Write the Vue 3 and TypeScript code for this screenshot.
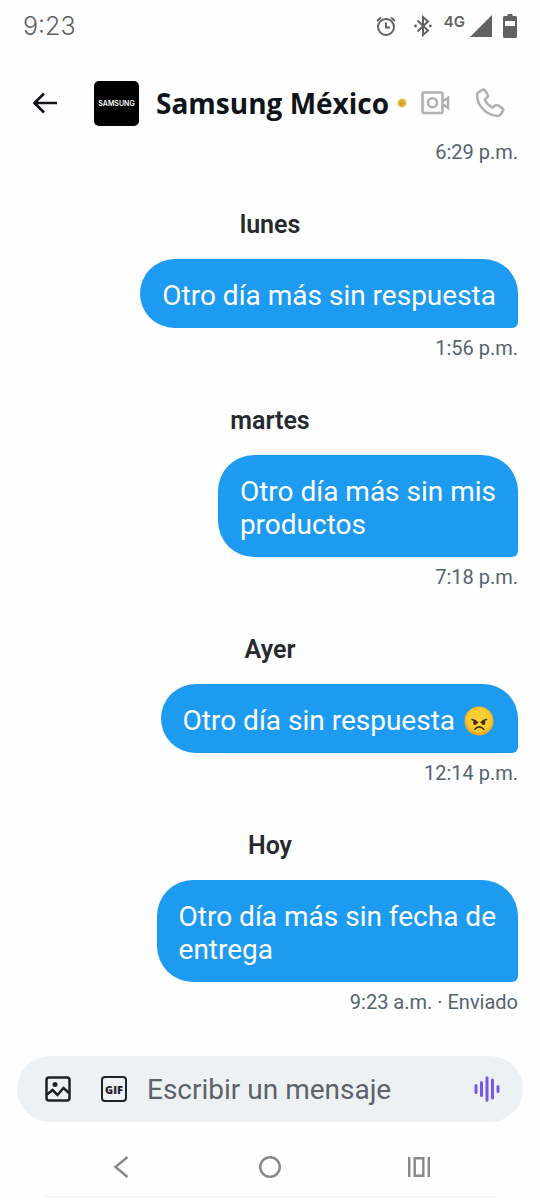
<script setup lang="ts">
import { ref } from 'vue'

interface Message {
  day: string
  text: string
  angry?: boolean
  meta: string
}

const messages: Message[] = [
  { day: 'lunes', text: 'Otro día más sin respuesta', meta: '1:56 p.m.' },
  { day: 'martes', text: 'Otro día más sin mis\nproductos', meta: '7:18 p.m.' },
  { day: 'Ayer', text: 'Otro día sin respuesta ', angry: true, meta: '12:14 p.m.' },
  { day: 'Hoy', text: 'Otro día más sin fecha de\nentrega', meta: '9:23 a.m. · Enviado' },
]

const draft = ref('')
</script>

<template>
  <div class="screen">
    <div class="status">
      <span class="clock">9:23</span>
      <div class="status-icons">
        <svg class="alarm" width="20" height="20" viewBox="0 0 20 20" fill="none" stroke="#616161" stroke-width="2">
          <circle cx="10" cy="11" r="8" />
          <path d="M10 6.5V11.5H14M1 5L5 1.5M19 5L15 1.5" />
        </svg>
        <svg class="bluetooth" width="18" height="22" viewBox="0 0 18 22" fill="none" stroke="#616161" stroke-width="2">
          <path d="M3.5 5.5L14 15.5L9 20V2L14 6.5L3.5 16.5" />
          <circle cx="1.5" cy="11" r="1.4" fill="#616161" stroke="none" />
          <circle cx="16.3" cy="11" r="1.4" fill="#616161" stroke="none" />
        </svg>
        <span class="network">4G</span>
        <svg class="signal" width="22" height="22" viewBox="0 0 22 22" fill="#616161"><path d="M22 0V22H0Z" /></svg>
        <svg width="14" height="24" viewBox="0 0 14 24" fill="#616161">
          <path fill-rule="evenodd" d="M4.500 0H9.500V2H12.500Q14 2 14 3.500V22.500Q14 24 12.500 24H1.500Q0 24 0 22.500V3.500Q0 2 1.500 2H4.500ZM2 7V12H12V7Z" />
        </svg>
      </div>
    </div>

    <header class="header">
      <button class="icon-button back" aria-label="Atrás">
        <svg width="26" height="22" viewBox="0 0 26 22" fill="none" stroke="#0f1419" stroke-width="2.600">
          <path d="M25 11H3M12 1.500L2.500 11L12 20.500" />
        </svg>
      </button>
      <div class="avatar">SAMSUNG</div>
      <h1 class="name">Samsung México</h1>
      <svg class="badge" width="10" height="10" viewBox="0 0 10 10">
        <circle cx="5" cy="5" r="4.300" fill="#e2b52c" />
        <path d="M3 5.200L4.500 6.600L7 3.600" fill="none" stroke="#c99a1e" stroke-width="1.200" />
      </svg>
      <button class="icon-button video" aria-label="Videollamada">
        <svg width="29" height="24" viewBox="0 0 29 24" fill="none" stroke="#b0b1b3" stroke-width="2.600">
          <rect x="1.500" y="1.500" width="20" height="20.500" rx="1.500" />
          <circle cx="11.500" cy="11.700" r="4.500" />
          <path d="M22 10L27 6.800V16.800L22 13.600" />
        </svg>
      </button>
      <button class="icon-button phone" aria-label="Llamar">
        <svg width="30" height="30" viewBox="0 0 30 30" fill="none" stroke="#b0b1b3" stroke-width="2.600" stroke-linejoin="round">
          <path d="M3.500 4.200L7.500 1.800Q9 1 10 2.400L12.600 6.800Q13.400 8.200 12.200 9.400L9.800 11.600Q12 16.800 17.500 19.500L20.300 17.400Q21.500 16.600 22.900 17.400L27.300 20.200Q28.800 21.300 27.900 22.800L25.600 26.500Q24.600 28 22.500 28C12 27.500 2.500 18.500 2 7.500Q2 5.200 3.500 4.200Z" />
        </svg>
      </button>
    </header>

    <main class="thread">
      <p class="meta">6:29 p.m.</p>
      <section v-for="m in messages" :key="m.day" class="group">
        <h2 class="day">{{ m.day }}</h2>
        <p class="bubble"><span class="text">{{ m.text }}</span><svg v-if="m.angry" class="emoji" role="img" aria-label="Enojado" width="30" height="30" viewBox="0 0 30 30">
            <defs>
              <radialGradient id="face" cx="50%" cy="45%" r="55%">
                <stop offset="0" stop-color="#fdd43c" />
                <stop offset="0.700" stop-color="#fbc92e" />
                <stop offset="1" stop-color="#eda21d" />
              </radialGradient>
            </defs>
            <circle cx="15" cy="15" r="14.500" fill="url(#face)" />
            <g fill="#422b0d">
              <ellipse cx="11" cy="16.800" rx="1.900" ry="2.300" />
              <ellipse cx="19.500" cy="16.800" rx="1.900" ry="2.300" />
            </g>
            <path d="M8 13.500Q11 14 13.500 16.500M22.500 13.500Q19.500 14 17 16.500M10.700 23.200Q15.200 18.700 19.800 23.200" fill="none" stroke="#422b0d" stroke-width="1.600" stroke-linecap="round" />
          </svg></p>
        <p class="meta">{{ m.meta }}</p>
      </section>
    </main>

    <form class="composer" @submit.prevent>
      <button type="button" class="icon-button" aria-label="Foto">
        <svg width="26" height="26" viewBox="0 0 26 26" fill="none" stroke="#1d2129" stroke-width="2.500">
          <rect x="1.500" y="1.500" width="23" height="23" rx="2.500" />
          <path d="M2 18.500L7.500 14L12.500 19L18.500 12L24 17" />
          <circle cx="10" cy="8.500" r="2.500" fill="#1d2129" stroke="none" />
        </svg>
      </button>
      <button type="button" class="icon-button gif" aria-label="GIF">GIF</button>
      <input v-model="draft" class="field" type="text" placeholder="Escribir un mensaje" aria-label="Escribir un mensaje" />
      <button type="button" class="icon-button" aria-label="Mensaje de voz">
        <svg width="26" height="26" viewBox="0 0 26 26" stroke="#7856e8" stroke-width="3" stroke-linecap="round">
          <path d="M2 9.500V16.500M7.500 6.500V19.500M13 1.800V24.200M18.500 4V22M24 10.500V15.500" />
        </svg>
      </button>
    </form>

    <nav class="system">
      <button class="icon-button" aria-label="Volver">
        <svg width="16" height="22" viewBox="0 0 16 22" fill="none" stroke="#888" stroke-width="2.400"><path d="M14.500 1L2.500 11L14.500 21" /></svg>
      </button>
      <button class="icon-button" aria-label="Inicio">
        <svg width="24" height="24" viewBox="0 0 24 24" fill="none" stroke="#888" stroke-width="2.400"><circle cx="12" cy="12" r="9.800" /></svg>
      </button>
      <button class="icon-button" aria-label="Recientes">
        <svg width="24" height="22" viewBox="0 0 24 22" fill="none" stroke="#888" stroke-width="2.400"><path d="M2.200 1V21M21.800 1V21M7.700 2.200H16.300V19.800H7.700Z" /></svg>
      </button>
    </nav>
    <div class="edge"></div>
  </div>
</template>

<style>
body {
  margin: 0;
  background: #fefefe;
}
</style>

<style scoped>
.screen {
  display: flex;
  flex-direction: column;
  min-height: 100vh;
  background: #fefefe;
  color: #0f1419;
  font-family: Roboto, "Liberation Sans", sans-serif;
}
.status {
  display: flex;
  align-items: center;
  justify-content: space-between;
  height: 52px;
  padding: 0 23px;
  color: #616161;
}
.clock {
  font-family: Inter, sans-serif;
  font-size: 25px;
  font-weight: 300;
}
.status-icons {
  display: flex;
  align-items: center;
}
.bluetooth {
  margin: 0 12px 0 18px;
}
.network {
  align-self: flex-start;
  font-family: Inter, sans-serif;
  font-size: 15px;
  font-weight: 600;
  line-height: 16px;
}
.signal {
  margin: 0 11px 0 5px;
}
.icon-button {
  display: flex;
  align-items: center;
  justify-content: center;
  flex: none;
  padding: 0;
  border: 0;
  background: none;
  color: inherit;
}
.header {
  display: flex;
  align-items: center;
  height: 74px;
  padding: 14px 35px 0 32px;
}
.avatar {
  display: flex;
  align-items: center;
  justify-content: center;
  width: 45px;
  height: 45px;
  margin: 0 17px 0 36px;
  border-radius: 5px;
  background: #000;
  color: #fff;
  font: 600 7px Inter, sans-serif;
}
.name {
  margin: 0;
  font-family: "Open Sans", sans-serif;
  font-size: 28px;
  font-weight: 700;
  line-height: 36px;
  white-space: nowrap;
}
.badge {
  margin: 0 auto 0 8px;
}
.phone {
  margin-left: 25px;
}
.thread {
  flex: 1;
  padding: 0 22px;
}
.group {
  display: flex;
  flex-direction: column;
}
.day {
  margin: 49px 0 22px;
  font-size: 25px;
  font-weight: 600;
  line-height: 24px;
  text-align: center;
  color: #262a2f;
}
.bubble {
  align-self: flex-end;
  box-sizing: border-box;
  max-width: 80%;
  margin: 0 0 8px;
  padding: 20px 22px 16px;
  border-radius: 36px 36px 6px 36px;
  background: #1d9bf0;
  color: #fff;
  font-size: 28px;
  line-height: 33px;
}
.text {
  white-space: pre-wrap;
}
.emoji {
  margin: 0 2px;
  vertical-align: -6px;
}
.meta {
  margin: 0;
  font-size: 20px;
  line-height: 24px;
  text-align: right;
  color: #536471;
}
.composer {
  display: flex;
  align-items: center;
  height: 66px;
  margin: 0 17px;
  padding: 0 23px 0 28px;
  box-sizing: border-box;
  border-radius: 33px;
  background: #eef1f4;
}
.gif {
  box-sizing: border-box;
  width: 26px;
  height: 26px;
  margin: 0 20px 0 30px;
  border: 2px solid #1d2129;
  border-radius: 4px;
  color: #1d2129;
  font: 800 11px "Open Sans", sans-serif;
}
.field {
  flex: 1;
  min-width: 0;
  padding: 0;
  border: 0;
  outline: 0;
  background: none;
  color: #0f1419;
  font: 28px Roboto, sans-serif;
}
.field::placeholder {
  color: #5b6269;
  opacity: 1;
}
.system {
  display: grid;
  grid-template-columns: repeat(3, 1fr);
  align-items: center;
  justify-items: center;
  height: 58px;
  padding: 16px 47px 0;
}
.edge {
  height: 1px;
  margin: 0 44px 3px;
  background: #f5f5f5;
}
</style>
